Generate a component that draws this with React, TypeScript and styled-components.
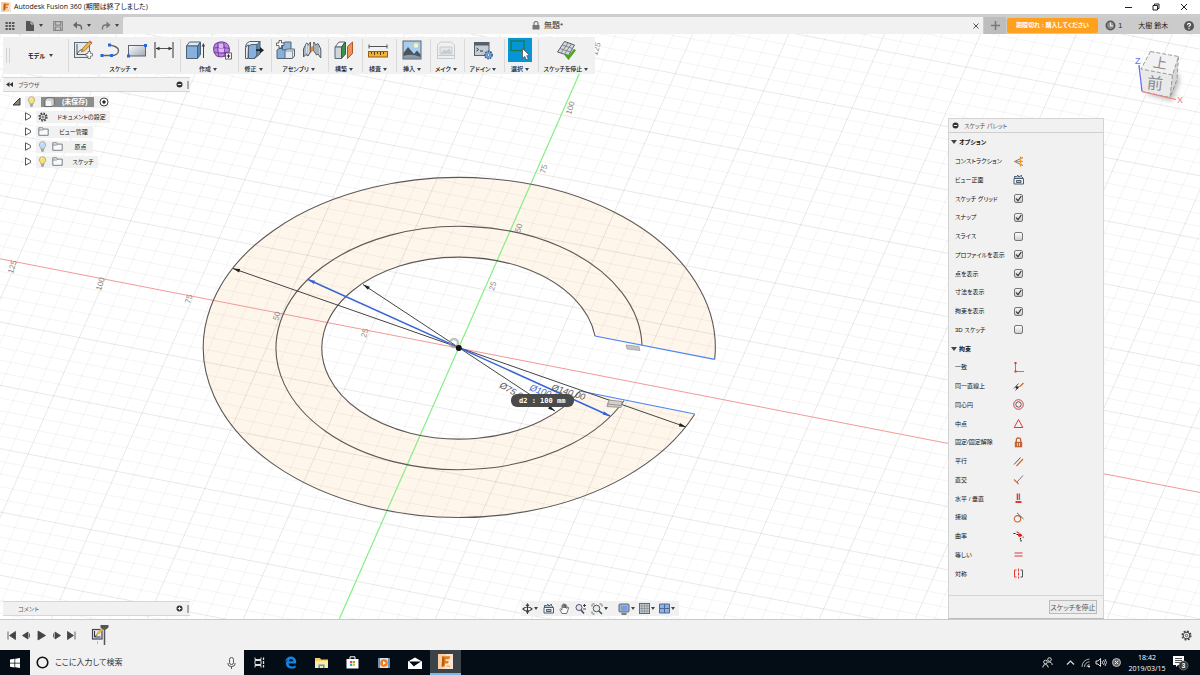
import React from "react";
import styled, { createGlobalStyle, css } from "styled-components";

const GlobalStyle = createGlobalStyle`
  *, *::before, *::after { box-sizing: border-box; }
  body {
    margin: 0;
    background: #fff;
    color: #333;
    font-family: "Liberation Sans", "Noto Sans CJK JP", sans-serif;
    font-size: 7px;
    line-height: 10px;
    font-feature-settings: "palt";
  }
  button, input {
    font: inherit;
    color: inherit;
    font-feature-settings: inherit;
    margin: 0;
    padding: 0;
    border: 0;
    background: none;
  }
  svg { display: block; flex: none; }
  ul { list-style: none; margin: 0; padding: 0; }
`;

/* ---------- page frame ---------- */

const Page = styled.div`
  min-height: 100vh;
  display: flex;
  flex-direction: column;
`;

const TitleBar = styled.header`
  height: 14px;
  display: flex;
  align-items: center;
  padding: 0 11px 0 1px;
  gap: 3px;
  background: #fff;
`;

const WindowTitle = styled.h1`
  margin: 0;
  flex: 1;
  font: 400 7px/12px "Open Sans", "Noto Sans CJK JP", sans-serif;
  font-feature-settings: "palt";
  color: #111;
  white-space: nowrap;
`;

const WindowControls = styled.div`
  display: flex;
  gap: 18px;
`;

const IconButton = styled.button`
  display: flex;
  align-items: center;
  justify-content: center;
  gap: 1px;
`;

const TabBar = styled.nav`
  height: 20px;
  display: flex;
  background: #cbcbcb;
  border-top: 3px solid #cdcdcd;
`;

const QuickAccess = styled.div`
  width: 123px;
  display: flex;
  align-items: center;
  padding-left: 5px;
  gap: 10px;
  ${IconButton} { gap: 4px; }
`;

const DocumentTab = styled.div`
  flex: 1;
  display: flex;
  align-items: center;
  padding-right: 3px;
  background: #f1f1f1;
  border-top-left-radius: 2px;
`;

const DocumentName = styled.span`
  flex: 1;
  display: flex;
  align-items: center;
  justify-content: center;
  gap: 4px;
  font-size: 8px;
`;

const NewTabButton = styled(IconButton)`
  width: 22px;
  margin-left: 1px;
  background: #bdbdbd;
`;

const AccountArea = styled.div`
  width: 194px;
  display: flex;
  align-items: center;
  padding: 0 6px 0 1px;
`;

const PurchaseButton = styled.button`
  width: 91px;
  height: 15px;
  border-radius: 2px;
  background: #ffa01e;
  color: #fff;
  font-size: 6px;
  font-weight: 700;
  line-height: 13px;
  text-align: center;
  white-space: nowrap;
`;

const JobStatus = styled(IconButton)`
  margin-left: 7px;
  gap: 2px;
  font-size: 8px;
`;

const UserButton = styled.button`
  flex: 1;
  padding: 0 4px;
  text-align: center;
  color: #222;
`;

/* ---------- canvas ---------- */

const Workspace = styled.main`
  position: relative;
  flex: 1;
  min-height: 500px;
  display: flex;
  overflow: hidden;
`;

const Drawing = styled.svg`
  position: absolute;
  inset: 0;
  width: 100%;
  height: 100%;
`;

const CubeDrawing = styled.svg`
  position: absolute;
  top: 12px;
  right: 10px;
`;

const LeftColumn = styled.div`
  position: relative;
  flex: 1;
  display: flex;
  flex-direction: column;
  align-items: flex-start;
  padding: 3px 0 3px 3px;
`;

const Toolbar = styled.div`
  height: 37px;
  display: flex;
  align-items: stretch;
  background: #f1f1f1;
  margin-bottom: 3px;
`;

const Grip = styled.span`
  width: 4px;
  height: 15px;
  margin: 11px 0 0 3px;
  border: solid #d2d2d2;
  border-width: 0 1px;
`;

const ModeButton = styled.button`
  width: 57px;
  display: flex;
  align-items: center;
  justify-content: center;
  gap: 4px;
  padding-left: 4px;
  font-size: 6px;
  font-weight: 700;
  color: #111;
`;

const ToolGroup = styled.div<{ $width: number }>`
  width: ${(p) => p.$width}px;
  display: flex;
  flex-direction: column;
  align-items: center;
  padding-top: 3px;
  background: linear-gradient(#dadada, #dadada) left 1px top 2px / 1px 33px no-repeat;
`;

const ToolIcons = styled.div`
  height: 25px;
  display: flex;
  gap: 7px;
  align-items: flex-start;
`;

const ToolButton = styled.button<{ $active?: boolean; $dim?: boolean }>`
  width: 20px;
  height: 20px;
  opacity: ${(p) => (p.$dim ? 0.4 : 1)};
  ${(p) =>
    p.$active &&
    css`
      width: 24px;
      height: 24px;
      margin-top: -2px;
      padding: 2px;
      background: #0696d7;
    `}
`;

const MenuLabel = styled.button`
  display: flex;
  align-items: center;
  gap: 2px;
  font-size: 6px;
  line-height: 9px;
  font-weight: 500;
  color: #111;
  white-space: nowrap;
`;

const Caret = styled.i`
  border: 2px solid transparent;
  border-top: 3px solid #444;
  border-bottom: 0;
`;

/* ---------- browser ---------- */

const StripPanel = styled.section`
  width: 187px;
  height: 15px;
  display: flex;
  align-items: center;
  gap: 5px;
  padding: 0 1px 0 3px;
  background: #f1f1f1;
  border: solid #d6d6d6;
  border-width: 1px 0;
  color: #555;
`;

const StripTitle = styled.h2<{ $inset?: boolean }>`
  margin: 0;
  flex: 1;
  padding-left: ${(p) => (p.$inset ? 12 : 0)}px;
  font-size: 6px;
  font-weight: 400;
`;

const EdgeMark = styled.span`
  width: 2px;
  height: 8px;
  border: solid #aaa;
  border-width: 0 1px;
  margin-left: -1px;
`;

const Tree = styled.ul`
  padding: 2px 0 0 9px;
`;

const TreeRow = styled.li<{ $level: number }>`
  height: 15px;
  display: flex;
  align-items: center;
  gap: 4px;
  padding-left: ${(p) => p.$level * 12}px;
`;

const TreeItem = styled.button<{ $width: number }>`
  width: ${(p) => p.$width}px;
  height: 12px;
  display: flex;
  align-items: center;
  gap: 5px;
  padding-left: 2px;
  background: #f1f1f1;
  font-size: 6px;
  color: #111;
  white-space: nowrap;
`;

const TreeText = styled.span`
  flex: 1;
  text-align: center;
`;

const Selected = styled.span`
  width: 54px;
  height: 10px;
  display: flex;
  align-items: center;
  gap: 7px;
  padding-left: 2px;
  background: #8d8d8d;
  color: #fff;
  font-size: 7px;
  font-weight: 700;
`;

const BottomRow = styled.div`
  align-self: stretch;
  margin-top: auto;
  display: flex;
  justify-content: space-between;
`;

const ViewBar = styled.div`
  width: 158px;
  height: 15px;
  display: flex;
  align-items: center;
  gap: 5px;
  padding: 0 4px 0 1px;
  margin-right: 269px;
  background: #f1f1f1;
`;

const ViewGroup = styled.div`
  display: flex;
  align-items: center;
  gap: 4px;
`;

/* ---------- sketch palette ---------- */

const Palette = styled.aside`
  position: relative;
  width: 156px;
  margin: 84px 96px 0 0;
  display: flex;
  flex-direction: column;
  background: #f1f1f1;
  border: 1px solid #d4d4d4;
  border-bottom-color: #bbb;
`;

const PaletteTitle = styled.h2`
  margin: 0;
  height: 14px;
  display: flex;
  align-items: center;
  gap: 5px;
  padding-left: 3px;
  border-bottom: 1px solid #cfcfcf;
  font-size: 6px;
  font-weight: 400;
  color: #555;
`;

const PaletteRows = styled.div`
  flex: 1;
  display: grid;
  grid-auto-rows: 1fr;
`;

const SectionTitle = styled.button`
  display: flex;
  align-items: center;
  gap: 2px;
  padding-left: 2px;
  font-size: 6px;
  font-weight: 700;
  color: #111;
`;

const SectionArrow = styled(Caret)`
  border-width: 3px;
  border-top-width: 4px;
  border-bottom-width: 0;
`;

const PaletteRow = styled.label`
  display: grid;
  grid-template-columns: 58px 11px;
  align-items: center;
  padding-left: 6px;
  font-size: 6px;
  color: #111;
  white-space: nowrap;
`;

const Check = styled.input`
  appearance: none;
  width: 9px;
  height: 9px;
  justify-self: center;
  border: 1px solid #777;
  border-radius: 2px;
  background: linear-gradient(#fdfdfd, #cfcfcf);
  &:checked {
    background: url("data:image/svg+xml,%3Csvg xmlns='http://www.w3.org/2000/svg' viewBox='0 0 7 7'%3E%3Cpath d='M1 3.5L3 5.7L6.3 1' fill='none' stroke='%23222' stroke-width='1.1'/%3E%3C/svg%3E"),
      linear-gradient(#f4f4f4, #c8c8c8);
  }
`;

const PaletteFooter = styled.div`
  height: 23px;
  margin-top: 12px;
  display: flex;
  align-items: center;
  justify-content: flex-end;
  padding-right: 6px;
  border-top: 1px solid #d4d4d4;
`;

const StopButton = styled.button`
  width: 48px;
  height: 14px;
  border: 1px solid #bbb;
  background: #ececec;
  line-height: 11px;
  color: #555;
  white-space: nowrap;
`;

/* ---------- timeline and taskbar ---------- */

const Timeline = styled.footer`
  height: 31px;
  display: flex;
  align-items: center;
  gap: 4px;
  padding: 0 8px 0 6px;
  background: #f1f1f1;
  border-top: 1px solid #cacaca;
`;

const Spacer = styled.span`
  flex: 1;
`;

const Feature = styled(IconButton)`
  margin-left: 10px;
`;

const Taskbar = styled.div`
  height: 25px;
  display: flex;
  align-items: stretch;
  background: #040c15;
  color: #fff;
`;

const StartButton = styled(IconButton)`
  width: 30px;
`;

const TaskButton = styled(IconButton)<{ $active?: boolean }>`
  width: 31px;
  border-bottom: ${(p) => (p.$active ? "2px solid #76b9ed" : "0")};
  background: ${(p) => (p.$active ? "#3b4248" : "none")};
`;

const SearchBox = styled.label`
  width: 214px;
  display: flex;
  align-items: center;
  gap: 6px;
  padding: 0 8px 0 6px;
  background: #f1f1f1;
  color: #444;
`;

const SearchInput = styled.input`
  flex: 1;
  min-width: 0;
  font-size: 8px;
  outline: 0;
  &::placeholder { color: #333; opacity: 1; }
`;

const Tray = styled.div`
  margin-left: auto;
  display: flex;
  align-items: center;
  gap: 4px;
  padding-right: 11px;
`;

const PeopleButton = styled(IconButton)`
  margin-right: 8px;
`;

const Clock = styled.time`
  width: 42px;
  text-align: center;
  font: 400 7px/11px "Open Sans", sans-serif;
`;

/* ---------- icons ---------- */

type IconProps = { w?: number; h?: number; box?: string; children: React.ReactNode };
const Icon = ({ w = 11, h = w, box, children }: IconProps) => (
  <svg width={w} height={h} viewBox={box ?? `0 0 ${w} ${h}`} fill="none" aria-hidden="true">
    {children}
  </svg>
);

const FusionLogo = ({ size }: { size: number }) => (
  <Icon w={size} box="0 0 16 16">
    <rect width="16" height="16" fill="#fbe3cf" />
    <path d="M0 0h9L5 16H0z" fill="#f8cfa8" />
    <path d="M4.5 2.5h8.5l-1 3H8.3l-.3 2h3.4l-.8 2.6H7.6L7 13.5H4z" fill="#e37d1c" />
    <path d="M4.5 2.5L6.500 4v7.600L4 13.500z" fill="#b75c0c" />
    <path d="M9 13h4" stroke="#f0a050" />
  </Icon>
);

const SketchIcon = (
  <Icon w={20}>
    <rect x="1.5" y="2.5" width="15" height="15" fill="#e4e9ee" stroke="#5f6a74" />
    <path d="M4 4v10.500h11M4 14.500c1-3 3-5 6-5" stroke="#555" />
    <path d="M8.500 12l1-3.500L16 1.500l2.500 2L12 10.500z" fill="#f4b73a" stroke="#80612a" strokeWidth=".7" />
    <path d="M16 1.500l2.500 2 .8-1-2.300-2z" fill="#d65d52" />
    <path d="M15 11.500h2.500v2H19.500V16H17.500v2.500H15V16h-2v-2.500h2z" fill="#fff" stroke="#666" strokeWidth=".8" />
  </Icon>
);

const sketchTools = [
  SketchIcon,
  <Icon w={20}>
    <path d="M2 15.500h9.500M11.500 15.500c4 0 7-2 7-5s-3-4.500-9-5.500" stroke="#666" strokeWidth="1.400" />
    <path d="M.5 14h3v3h-3zM10 14h3v3h-3zM8 3.500h3v3H8z" fill="#2c66d6" />
  </Icon>,
  <Icon w={20}>
    <defs>
      <linearGradient id="rectFill" x1="0" y1="0" x2="1" y2="1">
        <stop stopColor="#fafcff" />
        <stop offset="1" stopColor="#9fa9b5" />
      </linearGradient>
    </defs>
    <rect x="1.500" y="5.500" width="17" height="10.500" fill="url(#rectFill)" stroke="#5b6570" />
    <path d="M17 4h3v3h-3zM0 14.500h3v3H0z" fill="#2c66d6" />
  </Icon>,
  <Icon w={20}>
    <path d="M1 2v16M19 2v16M2 8.500h16" stroke="#555" strokeWidth="1.200" />
    <path d="M1.500 8.500l4-1.800v3.600zM18.500 8.500l-4-1.800v3.600z" fill="#333" />
  </Icon>,
];

const createTools = [
  <Icon w={20}>
    <path d="M1.500 6l3-4h11l-3 4z" fill="#dcebf8" stroke="#52616e" />
    <path d="M1.500 6h11v12.500h-11z" fill="#86b1dd" stroke="#52616e" />
    <path d="M12.500 6l3-4v12.500l-3 4z" fill="#5488bd" stroke="#52616e" />
    <path d="M18.500 18V5" stroke="#444" />
    <path d="M16.500 6.500l2-3.500 1.500 3.500z" fill="#444" />
  </Icon>,
  <Icon w={20}>
    <path d="M3 4Q9 0 15 3.500Q19 8 16.500 14Q11 18.500 4.500 16Q-.5 10 3 4z" fill="#bd86e0" stroke="#6c3d96" />
    <path d="M2 8q8-2 15.500.5M1.500 12q7 2.500 15.500 0M6 2.500Q4.500 9 7 17M11.500 2.500Q14 9 12 17" stroke="#713fa0" strokeWidth=".9" />
    <path d="M7 4h4v4H7zM7 9h5v3H7z" fill="#dcb8f2" />
    <rect x="13.500" y="13" width="6" height="6" fill="#fff" stroke="#444" strokeWidth=".8" />
    <path d="M16.500 14.300v3.600M14.700 16h3.600" stroke="#222" />
  </Icon>,
];

const modifyTools = [
  <Icon w={20}>
    <path d="M1.500 7q0-4 4-5.500h10.500L13 5.500z" fill="#e8f0f8" stroke="#52616e" />
    <path d="M1.500 18.500V8q1-3 3-3l-.5 13.500z" fill="#e5ebf0" stroke="#52616e" />
    <path d="M4.500 18.500V7q1-2.500 3.500-2.500h5v11l-2.500 3z" fill="#86b1dd" stroke="#52616e" />
    <path d="M13 4.500l3-3V14l-5.500 4.500L13 15z" fill="#5e90c2" stroke="#52616e" />
    <path d="M12 9.300h4V7l4 3.200-4 3.200v-2.400h-4z" fill="#222" />
  </Icon>,
];

const assembleTools = [
  <Icon w={20}>
    <path d="M2 18.500V10l2-1.500h7V18.500z" fill="#86b1dd" stroke="#566470" />
    <path d="M7.500 10V4L9.500 2h6.500v7.500z" fill="#8db5de" stroke="#566470" />
    <path d="M10 18.500V11l2-2h7.500v7l-2 2.500z" fill="#e6eaef" stroke="#566470" />
    <path d="M10 11h7.500v7.500M17.500 11l2-2" stroke="#8a95a0" />
    <path d="M4 .5h2.500V3H9v2.500H6.500V8H4V5.500H1.500V3H4z" fill="#fff" stroke="#444" strokeWidth=".8" />
  </Icon>,
  <Icon w={20}>
    <path d="M1.500 17V9L4.500 3l2 1.500L8.500 2v10l-2.500 4-2-1.500z" fill="#a9b4bf" stroke="#4d5a66" />
    <path d="M4.500 13V4M6.300 6v8" stroke="#dfe5ea" />
    <path d="M8.800 7.500q1.500-3 3 0v2.500l-3 3z" fill="#ee8b36" />
    <path d="M18.800 18V9L16 3.500l-2 1.500L11.800 2v9l2.700 4 1.500-1z" fill="#ccd5dd" stroke="#4d5a66" />
    <path d="M14 5v9M16 5v9" stroke="#6e7c88" strokeWidth=".8" />
  </Icon>,
];

const constructTools = [
  <Icon w={20}>
    <path d="M1 7l4-5h6L7.500 7z" fill="#f4f7f9" stroke="#5b6670" />
    <path d="M1 7h6.500v11.500H1z" fill="#cfd7dd" stroke="#5b6670" />
    <path d="M7.500 7L11.500 2v12l-4 4.500z" fill="#3c9448" stroke="#2d6636" />
    <path d="M13.500 6.500L18.500 2v11.500l-5 5z" fill="#ef9358" stroke="#a85a2a" />
  </Icon>,
];

const inspectTools = [
  <Icon w={20}>
    <path d="M1 6.500h18M1 4.500v4M19 4.500v4" stroke="#555" />
    <rect x=".5" y="11.500" width="19" height="5.500" fill="#f2b233" stroke="#8a651c" />
    <path d="M3.500 12v2M6.500 12v3M9.500 12v2M12.500 12v3M15.500 12v2" stroke="#5a3f08" />
  </Icon>,
];

const insertTools = [
  <Icon w={20}>
    <rect x="1" y="1" width="18" height="18" fill="#a9cdec" stroke="#5b6670" />
    <circle cx="14" cy="5.500" r="2.300" fill="#fff2b8" />
    <path d="M1.500 13L6 7l6 7 3-3.500 3.500 4v4h-17z" fill="#4b545e" />
    <path d="M1.500 16q8-3 17 1v1.500h-17z" fill="#8d98a4" />
  </Icon>,
];

const makeTools = [
  <Icon w={20}>
    <path d="M1.500 5l3-3h11l3 3v13.500h-17z" fill="#eceff1" stroke="#8a9299" />
    <path d="M4 7h12v7H4z" fill="#d5dade" stroke="#8a9299" />
    <path d="M5.500 13l3-3 2 1.500 2.500-2.500 2 4zM1.500 15.500h17" fill="#8495a4" stroke="#8a9299" />
  </Icon>,
];

const addinTools = [
  <Icon w={20}>
    <rect x="1.500" y="2.500" width="14.500" height="13" fill="#c5ccd5" stroke="#56606c" />
    <path d="M1.500 2.500h14.500v3H1.500z" fill="#56606c" />
    <path d="M3.500 8l2 1.500-2 1.500M7 11h3" stroke="#333" />
    <circle cx="15.500" cy="15" r="3.600" fill="#85abd8" stroke="#345f93" strokeWidth="1.600" strokeDasharray="1.700 .9" />
    <circle cx="15.500" cy="15" r="1.300" fill="#fff" stroke="#345f93" strokeWidth=".7" />
  </Icon>,
];

const selectTools = [
  <Icon w={20}>
    <rect x="1" y="1" width="13" height="9.500" stroke="#177c49" strokeWidth="1.300" />
    <path d="M12.500 8.500v10l2.300-2 1.600 3.200 1.900-.9-1.600-3.100h2.900z" fill="#fff" stroke="#555" strokeWidth=".8" />
  </Icon>,
];

const stopTools = [
  <Icon w={20}>
    <path d="M1.500 12L8.500 1.500l10 3.500-6 10.500z" fill="#d5d9de" stroke="#566069" />
    <path d="M4 8.500l10.500 3.500M6.300 5l10.200 3.500M5 13l7-10M8.700 14l6.600-10" stroke="#7b858e" />
    <path d="M9.500 14.500l3 3.500L19 9.500" stroke="#4aa51f" strokeWidth="2.600" />
  </Icon>,
];

const Bulb = ({ color }: { color: string }) => (
  <Icon w={9} h={11}>
    <path d="M4.500.7a3.200 3.200 0 0 0-1.700 5.900V8h3.400V6.600A3.200 3.200 0 0 0 4.500.7z" fill={color} stroke="#8c8c70" strokeWidth=".6" />
    <path d="M3 9h3M3.500 10.200h2" stroke="#666" strokeWidth=".8" />
    <path d="M3.300 3q.2-1 1.200-1.200" stroke="#fff" strokeWidth=".7" />
  </Icon>
);

const Folder = () => (
  <Icon w={11} h={9}>
    <path d="M.8 8.300V.8h3.800l1 1.300h4.600v6.200z" fill="#fafafa" stroke="#6a7480" strokeWidth=".9" />
    <path d="M.8 3h4l1-1" stroke="#6a7480" strokeWidth=".8" />
  </Icon>
);

const Gear = ({ size = 10 }: { size?: number }) => (
  <Icon w={size} box="0 0 12 12">
    <circle cx="6" cy="6" r="4.700" stroke="#444" strokeWidth="1.700" strokeDasharray="2 1.690" />
    <circle cx="6" cy="6" r="3.500" stroke="#444" strokeWidth="1.100" />
    <circle cx="6" cy="6" r="1.300" stroke="#444" strokeWidth=".9" />
  </Icon>
);

const Expander = () => (
  <Icon w={8} h={9}>
    <path d="M1.500.8v7.400l5-2.700V3.500z" stroke="#555" fill="#fff" />
  </Icon>
);

const Dot = ({ plus }: { plus?: boolean }) => (
  <Icon w={7}>
    <circle cx="3.500" cy="3.500" r="3" fill="#333" />
    <path d={plus ? "M1.800 3.500h3.400M3.500 1.800v3.400" : "M1.800 3.500h3.400"} stroke="#fff" strokeWidth=".9" />
  </Icon>
);

/* ---------- toolbar data ---------- */

type Group = { label: string; width: number; tools: React.ReactNode[]; active?: boolean; dim?: boolean };

const groups: Group[] = [
  { label: "スケッチ", width: 112, tools: sketchTools },
  { label: "作成", width: 58, tools: createTools },
  { label: "修正", width: 33, tools: modifyTools },
  { label: "アセンブリ", width: 57, tools: assembleTools },
  { label: "構築", width: 34, tools: constructTools },
  { label: "検査", width: 34, tools: inspectTools },
  { label: "挿入", width: 34, tools: insertTools },
  { label: "メイク", width: 34, tools: makeTools, dim: true },
  { label: "アドイン", width: 40, tools: addinTools },
  { label: "選択", width: 34, tools: selectTools, active: true },
  { label: "スケッチを停止", width: 58, tools: stopTools },
];

/* ---------- palette data ---------- */

const ConstructionIcon = (
  <Icon>
    <path d="M10 1.500L1.500 5.500 10 9.500" stroke="#777" />
    <path d="M7.500 .5v10" stroke="#ef9428" strokeWidth="1.300" strokeDasharray="3 .5" />
    <path d="M2.500 5.500H10" stroke="#ef9428" strokeWidth="1.300" />
  </Icon>
);
const LookAtIcon = (
  <Icon>
    <path d="M1 4.500h9.500V10H1z" stroke="#4c5e70" fill="#eef2f5" />
    <path d="M3.500 6.500h4.500v2H3.500zM1.500 4V2.500h2L5 1v1.500h2L8.500 1v1.500L10 4" stroke="#4c5e70" fill="#b6c5d2" />
  </Icon>
);

const toggles: [string, boolean][] = [
  ["スケッチ グリッド", true],
  ["スナップ", true],
  ["スライス", false],
  ["プロファイルを表示", true],
  ["点を表示", true],
  ["寸法を表示", true],
  ["拘束を表示", true],
  ["3D スケッチ", false],
];

const constraints: [string, React.ReactNode][] = [
  ["一致", <><path d="M2.500 1v8M3 9.500h8" stroke="#888" /><path d="M1.500 0h2v2h-2zM1.500 8.500h2v2h-2z" fill="#e2322d" /></>],
  ["同一直線上", <><path d="M1 7.500L5.500 2.500M2.500 9.500l4-4.500" stroke="#555" /><circle cx="4" cy="6.500" r="1.300" fill="#222" /><path d="M7 5.500L10.500 2" stroke="#d9652f" strokeWidth="1.200" /></>],
  ["同心円", <><circle cx="5.500" cy="5.500" r="4.800" stroke="#e0383a" /><circle cx="5.500" cy="5.500" r="2.700" stroke="#556" /></>],
  ["中点", <path d="M5.500 1.500L9.800 9.500H1.200z" stroke="#e0383a" />],
  ["固定/固定解除", <><path d="M3.300 5V3a2.200 2.200 0 0 1 4.400 0v2" stroke="#c56336" strokeWidth="1.300" /><path d="M1.800 4.800h7.400v5.500H1.800z" fill="#c56336" /><path d="M4.500 6v3M6.500 6v3" stroke="#fff" strokeWidth=".7" /></>],
  ["平行", <><path d="M1 8.500L7.500 1.500" stroke="#555" /><path d="M3.500 10L10 3" stroke="#d9652f" strokeWidth="1.200" /></>],
  ["直交", <><path d="M4 8L10 1.500" stroke="#777" /><path d="M1 5.500l4.500 4.500" stroke="#d9652f" strokeWidth="1.200" /></>],
  ["水平 / 垂直", <><path d="M4.500.5v6.500" stroke="#e0383a" strokeWidth="1.600" /><path d="M6.500.5v6.500" stroke="#777" strokeWidth="1.200" /><path d="M2.500 9h6" stroke="#e0383a" strokeWidth="2" /></>],
  ["接線", <><circle cx="4.500" cy="6.800" r="3.200" stroke="#c56336" strokeWidth="1.100" /><path d="M4 .8L10.500 7" stroke="#666" /></>],
  ["曲率", <><path d="M.5 2.500h2M3.500 3.500h2M7.500 7v1.500M8 9v1.500" stroke="#222" strokeWidth="1.200" /><path d="M3.500 .8q4.500 2 7 6" stroke="#e0383a" strokeWidth="1.200" strokeDasharray="3 1" /><circle cx="6.800" cy="4.300" r="1.700" fill="#e51818" /></>],
  ["等しい", <path d="M1.500 4h8M1.500 7h8" stroke="#e0383a" strokeWidth="1.100" />],
  ["対称", <><path d="M3.500 2H1.500v7h2" stroke="#e0383a" /><path d="M7.500 2h2v7h-2" stroke="#555" /><path d="M5.500.5v10" stroke="#e0383a" strokeDasharray="3 1" /></>],
];

/* ---------- sketch drawing ---------- */

const origin = { x: 458.6, y: 348 };
const stepX = { x: 17.68, y: 3.44 };
const stepY = { x: 5.13, y: -11.66 };

function gridPath(major: boolean) {
  const parts: string[] = [];
  const line = (a: typeof stepX, b: typeof stepX, i: number) => {
    const cx = origin.x + a.x * i;
    const cy = origin.y + a.y * i;
    parts.push(`M${cx - b.x * 90} ${cy - b.y * 90}L${cx + b.x * 90} ${cy + b.y * 90}`);
  };
  for (let i = -60; i <= 60; i++) {
    if (i === 0 || (i % 5 === 0) !== major) continue;
    line(stepX, stepY, i);
    line(stepY, stepX, i);
  }
  return parts.join("");
}

const ticks: [number, number, string][] = [
  [13, 274, "125"], [101, 291, "100"], [190, 304, "75"], [278, 321, "50"], [366, 338, "25"],
  [494, 291, "25"], [520, 233, "50"], [545, 174, "75"], [571, 115, "100"], [597, 56, "125"],
];

const Arrow = ({ x, y, angle, color = "#222" }: { x: number; y: number; angle: number; color?: string }) => (
  <path d="M0 0L-7 -1.800V1.800z" fill={color} transform={`translate(${x} ${y}) rotate(${angle})`} />
);

const SketchDrawing = () => (
  <Drawing viewBox="0 34 1200 585" preserveAspectRatio="xMidYMid slice" fill="none">
    <path
      d="M595 336L714.700 359.300A256 170 0 1 0 694.700 414.300L580 391A137.200 91 0 1 1 595 336z"
      fill="#fef5eb"
    />
    <path d={gridPath(false)} stroke="#000" strokeOpacity=".045" />
    <path d={gridPath(true)} stroke="#000" strokeOpacity=".09" />
    <path d="M0 258.800L1200 492.500" stroke="#f29a98" />
    <path d="M588 54L338 622" stroke="#86ee86" strokeWidth="1.200" />
    <g stroke="#5c5856" strokeWidth="1.100">
      <path d="M714.700 359.300A256 170 0 1 0 694.700 414.300" />
      <path d="M642 345.500A183 121.700 0 1 0 624 400.700" />
      <path d="M595 336A137.200 91 0 1 0 580 391" />
    </g>
    <path d="M595 336L714.700 359.300M580 391L694.700 414" stroke="#4b84f5" strokeWidth="1.200" />
    <path d="M233 268.500L686 427M363 284.500L555 411" stroke="#444" />
    <path d="M308 279.500L610 416" stroke="#3764d6" strokeWidth="1.500" />
    <Arrow x={233} y={268.5} angle={199} />
    <Arrow x={686} y={427} angle={19} />
    <Arrow x={363} y={284.5} angle={213} />
    <Arrow x={555} y={411} angle={33} />
    <Arrow x={308} y={279.5} angle={204} color="#3764d6" />
    <Arrow x={610} y={416} angle={24} color="#3764d6" />
    <circle cx="454" cy="343" r="4" stroke="#999" strokeWidth="2.500" strokeOpacity=".6" />
    <circle cx="458.800" cy="348" r="3" fill="#111" />
    <path d="M626 345l13 1.500 1 4-13-1.500z" fill="#c4c4c4" stroke="#999" strokeWidth=".7" />
    <path d="M609 400l13 1.500-1 6-14-1zM607 404l14 1.500" fill="#d4d0cb" stroke="#8a8782" strokeWidth=".8" />
    <g fontFamily="Liberation Sans Narrow, Liberation Sans, sans-serif" fontSize="8" fill="#888">
      {ticks.map(([x, y, text]) => (
        <text key={`${x}-${y}`} transform={`translate(${x} ${y}) rotate(-74)`}>{text}</text>
      ))}
    </g>
    <g fontFamily="Liberation Sans, sans-serif" fontStyle="italic" fontSize="9">
      <text transform="translate(499 387) rotate(30)" fill="#555">Ø75.00</text>
      <text transform="translate(529 390) rotate(20)" fill="#3764d6">Ø100.00</text>
      <text transform="translate(551 390) rotate(17)" fill="#555">Ø140.00</text>
    </g>
    <rect x="511" y="394" width="63" height="13" rx="6" fill="#4a4a4a" />
    <text x="519" y="403" fontFamily="DejaVu Sans Mono, monospace" fontWeight="700" fontSize="7" fill="#fff">d2 : 100 mm</text>
  </Drawing>
);

const ViewCube = () => (
  <CubeDrawing width="60" height="64" viewBox="1130 46 60 64" fill="none">
    <defs>
      <filter id="cubeShadow" x="-50%" y="-50%" width="200%" height="200%">
        <feGaussianBlur stdDeviation="2.500" />
      </filter>
    </defs>
    <path d="M1146 94l26 7 7-18v-10z" fill="#777" opacity=".5" filter="url(#cubeShadow)" />
    <path d="M1150.500 51.500l28 5-6 18.500-31.500-6z" fill="#f2f2f2" />
    <path d="M1141 69l31.500 6-2.500 22.500-28-6z" fill="#e9e9ea" />
    <path d="M1178.500 56.500l-1.500 23-7 18 2.500-22.500z" fill="#d6d6d8" />
    <path d="M1150.500 51.500l28 5-6 18.500-31.500-6zM1178.500 56.500l-1.500 23-7 18M1172.500 75l-2.500 22.500-28-6" stroke="#9a9a9a" strokeDasharray="4 2" />
    <path d="M1142 91.500L1139 65" stroke="#6c6cf0" strokeWidth="1.300" />
    <path d="M1142 91.500l34 8" stroke="#f08080" strokeWidth="1.200" />
    <g fontFamily="Noto Sans CJK JP, sans-serif" fill="#888b92">
      <text x="1153" y="68" fontSize="14" transform="rotate(10 1160 63)">上</text>
      <text x="1147" y="89" fontSize="16" transform="rotate(6 1154 83)">前</text>
    </g>
    <g fontFamily="Liberation Sans, sans-serif" fontSize="9">
      <text x="1135" y="64" fill="#6c6cf0">Z</text>
      <text x="1177" y="103" fill="#f08080">X</text>
    </g>
  </CubeDrawing>
);

/* ---------- sections ---------- */

const Header = () => (
  <>
    <TitleBar>
      <FusionLogo size={10} />
      <WindowTitle>Autodesk Fusion 360 (期間は終了しました)</WindowTitle>
      <WindowControls>
        <IconButton aria-label="最小化"><Icon w={10}><path d="M2 5.500h7" stroke="#222" /></Icon></IconButton>
        <IconButton aria-label="元に戻す"><Icon w={10}><path d="M2 3.500h4.500v4.500H2zM3.500 3.500V2H8v4.500H6.500" stroke="#222" /></Icon></IconButton>
        <IconButton aria-label="閉じる"><Icon w={10}><path d="M2 2l6 6M8 2L2 8" stroke="#222" /></Icon></IconButton>
      </WindowControls>
    </TitleBar>
    <TabBar>
      <QuickAccess>
        <IconButton aria-label="データ パネル">
          <Icon w={10}><path d="M.5 2h10M.5 5h10M.5 8h10" stroke="#555" strokeWidth="2" strokeDasharray="2.300 1" /></Icon>
        </IconButton>
        <IconButton aria-label="ファイル">
          <Icon w={10}><path d="M1 0h5l3 3v7H1z" fill="#555" /><path d="M6 0v3h3" stroke="#cbcbcb" /></Icon>
          <Caret />
        </IconButton>
        <IconButton aria-label="保存">
          <Icon w={10}><path d="M.7.700h8.600v8.600H.7zM2.500.7v3.500h5V.700M2.500 9V6h5v3" stroke="#888" strokeWidth="1.200" /></Icon>
        </IconButton>
        <IconButton aria-label="元に戻す操作">
          <Icon w={10}><path d="M3 4h2.500Q9 4 8.500 8.500" stroke="#666" strokeWidth="1.500" /><path d="M0 4l4-3.500v7z" fill="#666" /></Icon>
          <Caret />
        </IconButton>
        <IconButton aria-label="やり直し">
          <Icon w={10}><path d="M7 4H4.500Q1 4 1.500 8.500" stroke="#777" strokeWidth="1.500" /><path d="M9.500 4l-4-3.500v7z" fill="#777" /></Icon>
          <Caret />
        </IconButton>
      </QuickAccess>
      <DocumentTab>
        <DocumentName>
          <Icon w={8} h={9}><path d="M2 4V2.500a2 2 0 0 1 4 0V4" stroke="#777" strokeWidth="1.200" /><path d="M.500 4h7v4.500h-7z" fill="#777" /></Icon>
          無題*
        </DocumentName>
        <IconButton aria-label="タブを閉じる"><Icon w={8}><path d="M1.500 1.500l5 5M6.500 1.500l-5 5" stroke="#555" /></Icon></IconButton>
      </DocumentTab>
      <NewTabButton aria-label="新しいタブ"><Icon w={9}><path d="M4.500 0v9M0 4.500h9" stroke="#777" strokeWidth="1.500" /></Icon></NewTabButton>
      <AccountArea>
        <PurchaseButton>期限切れ : 購入してください</PurchaseButton>
        <JobStatus>
          <Icon><circle cx="5.500" cy="5.500" r="4.200" fill="#888" stroke="#555" strokeWidth="1.500" /><path d="M5.500 2.500v3.300h2.500" stroke="#eee" strokeWidth="1.200" /></Icon>
          1
        </JobStatus>
        <UserButton>大樹 鈴木</UserButton>
        <IconButton aria-label="ヘルプ">
          <Icon w={10}><circle cx="5" cy="5" r="5" fill="#555" /><path d="M3.500 4q0-1.600 1.500-1.600T6.500 3.800Q6.500 4.800 5 5.300v1M5 7v1.200" stroke="#fff" strokeWidth="1.100" /></Icon>
        </IconButton>
      </AccountArea>
    </TabBar>
  </>
);

const Browser = () => (
  <>
    <StripPanel>
      <Icon w={7}><path d="M3.500 1v5L0 3.500zM7 1v5L3.500 3.500z" fill="#333" /></Icon>
      <StripTitle>ブラウザ</StripTitle>
      <Dot />
      <EdgeMark />
    </StripPanel>
    <Tree>
      <TreeRow $level={0}>
        <Icon w={9}><path d="M8 1v7H1z" fill="#888" stroke="#333" /></Icon>
        <TreeItem $width={84}>
          <Bulb color="#fbe36a" />
          <Selected>
            <Icon w={12} h={10}><path d="M2 3l2-2h7v6.500L9 9.500H2z" fill="#f6f6f6" stroke="#555" strokeWidth=".8" /><path d="M2 3h7v6.500M9 3l2-2" stroke="#999" strokeWidth=".7" /></Icon>
            (未保存)
          </Selected>
          <Icon w={10}><circle cx="5" cy="5" r="4" stroke="#444" fill="#fff" /><circle cx="5" cy="5" r="1.700" fill="#222" /></Icon>
        </TreeItem>
      </TreeRow>
      <TreeRow $level={1}>
        <Expander />
        <TreeItem $width={74}><Gear /><TreeText>ドキュメントの設定</TreeText></TreeItem>
      </TreeRow>
      <TreeRow $level={1}>
        <Expander />
        <TreeItem $width={57}><Folder /><TreeText>ビュー管理</TreeText></TreeItem>
      </TreeRow>
      <TreeRow $level={1}>
        <Expander />
        <TreeItem $width={57}><Bulb color="#bfdcfb" /><Folder /><TreeText>原点</TreeText></TreeItem>
      </TreeRow>
      <TreeRow $level={1}>
        <Expander />
        <TreeItem $width={62}><Bulb color="#fbe36a" /><Folder /><TreeText>スケッチ</TreeText></TreeItem>
      </TreeRow>
    </Tree>
  </>
);

const ViewTools = () => (
  <ViewBar>
    <IconButton aria-label="オービット">
      <Icon><ellipse cx="5.500" cy="6" rx="4.500" ry="1.800" stroke="#555" /><path d="M5.500 1v10" stroke="#333" /><path d="M5.500 0l2 3h-4zM5.500 11l2-3h-4zM0 6l2.500-1.800v3.600zM11 6L8.500 4.200v3.600z" fill="#444" /></Icon>
      <Caret />
    </IconButton>
    <IconButton aria-label="ビュー正面">{LookAtIcon}</IconButton>
    <IconButton aria-label="画面移動">
      <Icon><path d="M3 10.500L.8 6.500l.9-.7L3 7V2.300h1V5V1h1.300v4V1.300h1.200V5V2.300h1.200V5.500l1-1.500 1 .6-2 5.900z" fill="#fff" stroke="#555" strokeWidth=".8" /></Icon>
    </IconButton>
    <IconButton aria-label="ズーム">
      <Icon><circle cx="4" cy="4.500" r="3" fill="#dfeaf4" stroke="#556" /><path d="M6 7l3 3.500" stroke="#445" strokeWidth="1.500" /><path d="M8 2.500h3M9.500 1v3M8 6h3" stroke="#333" strokeWidth=".9" /></Icon>
    </IconButton>
    <IconButton aria-label="フィット">
      <Icon w={12}><path d="M1 3.500V1h2.500M1 8.500V11h2.500M8.500 1H11v2.500" stroke="#666" strokeDasharray="2 1" /><circle cx="5.500" cy="5.500" r="3.300" fill="#dfeee8" stroke="#556" /><path d="M8 8l3 3" stroke="#445" strokeWidth="1.500" /></Icon>
      <Caret />
    </IconButton>
    <Spacer />
    <ViewGroup>
      <IconButton aria-label="表示設定">
        <Icon w={12}><rect x="1" y="1" width="10" height="8" rx="1" fill="#a8b2bc" stroke="#5b6670" /><path d="M3 3h6v4.500H3z" fill="#6d9ff0" /><path d="M3.500 11h5" stroke="#555" strokeWidth="1.500" /></Icon>
        <Caret />
      </IconButton>
      <IconButton aria-label="グリッドとスナップ">
        <Icon><rect x=".5" y=".5" width="10" height="10" fill="#c9ced3" stroke="#666" /><path d="M.5 3h10M.5 5.500h10M.5 8h10M3 .5v10M5.500.5v10M8 .5v10" stroke="#808890" strokeWidth=".7" /></Icon>
        <Caret />
      </IconButton>
      <IconButton aria-label="ビューポート">
        <Icon><path d="M.5 1h10v9H.5zM5.500 1v9M.5 5.500h10" fill="#8db2e8" stroke="#4f6a92" /></Icon>
        <Caret />
      </IconButton>
    </ViewGroup>
    <Spacer />
  </ViewBar>
);

const SketchPalette = () => (
  <Palette>
    <PaletteTitle><Dot />スケッチ パレット</PaletteTitle>
    <PaletteRows>
      <SectionTitle><SectionArrow />オプション</SectionTitle>
      <PaletteRow>コンストラクション<IconButton aria-label="コンストラクション">{ConstructionIcon}</IconButton></PaletteRow>
      <PaletteRow>ビュー正面<IconButton aria-label="ビュー正面">{LookAtIcon}</IconButton></PaletteRow>
      {toggles.map(([label, on]) => (
        <PaletteRow key={label}>{label}<Check type="checkbox" defaultChecked={on} /></PaletteRow>
      ))}
      <SectionTitle><SectionArrow />拘束</SectionTitle>
      {constraints.map(([label, drawing]) => (
        <PaletteRow key={label}>{label}<IconButton aria-label={label}><Icon>{drawing}</Icon></IconButton></PaletteRow>
      ))}
    </PaletteRows>
    <PaletteFooter><StopButton>スケッチを停止</StopButton></PaletteFooter>
  </Palette>
);

const playback: [string, string][] = [
  ["最初へ", "M2 1.500V9.500M9.500 1.500v8L3.500 5.500z"],
  ["前へ", "M7 2v7L1.500 5.500zM8.500 3.500v4"],
  ["再生", "M2 1v9L9.500 5.500z"],
  ["次へ", "M4 2v7L9.500 5.500zM2.500 3.500v4"],
  ["最後へ", "M9 1.500V9.500M1.500 1.500v8L7.500 5.500z"],
];

const TimelineBar = () => (
  <Timeline>
    {playback.map(([label, d]) => (
      <IconButton key={label} aria-label={label}><Icon><path d={d} fill="#444" stroke="#444" strokeWidth=".8" /></Icon></IconButton>
    ))}
    <Feature aria-label="スケッチ 1">
      <Icon w={20} h={22}>
        <rect x="1.500" y="5.500" width="9.500" height="9.500" fill="#dce9f5" stroke="#445" strokeWidth="1.200" />
        <path d="M3.500 7v6h6M3.500 13l4-4" stroke="#333" />
        <path d="M5 11l1.500-3L12 3l1.500 1.500L8 10z" fill="#f4b030" />
        <path d="M9.500 1h8v2.500l-2.500 2H12l-2.500-2z" fill="#555" />
        <path d="M13.500 5v16" stroke="#555" strokeWidth="1.500" />
        <path d="M6.500 17v3" stroke="#bbb" />
      </Icon>
    </Feature>
    <Spacer />
    <IconButton aria-label="設定"><Gear size={11} /></IconButton>
  </Timeline>
);

const WindowsTaskbar = () => (
  <Taskbar>
    <StartButton aria-label="スタート">
      <Icon w={10}><path d="M0 1.500l4.500-.7v4H0zM5.200.700L10 0v4.800H5.200zM0 5.500h4.500v4L0 8.800zM5.200 5.500H10V10l-4.800-.7z" fill="#fff" /></Icon>
    </StartButton>
    <SearchBox>
      <Icon w={13}><circle cx="6.500" cy="6.500" r="5.300" stroke="#111" strokeWidth="1.600" /></Icon>
      <SearchInput aria-label="検索" placeholder="ここに入力して検索" />
      <Icon w={9} h={12}><rect x="2.500" y=".5" width="4" height="7" rx="2" stroke="#555" /><path d="M1 6v1q0 2.500 3.500 2.500T8 7V6M4.500 9.500V12" stroke="#555" /></Icon>
    </SearchBox>
    <TaskButton aria-label="タスク ビュー">
      <Icon><path d="M1 .5v2h6v-2M1 10.500v-2h6v2M1 3.500h6v4H1z" stroke="#ddd" /><path d="M9.500.5v2.500M9.500 4v3M9.500 8v2.500" stroke="#ddd" strokeWidth="1.300" /></Icon>
    </TaskButton>
    <TaskButton aria-label="Edge">
      <Icon w={13}><path d="M1 6.300C1.500 2.500 4 .6 6.800.6c3.500 0 5.400 2.400 5.400 5.500v1.400H4.700c.1 2.200 1.800 2.900 3.500 2.900 1.300 0 2.400-.3 3.400-.9v2.300c-1.100.6-2.300.8-3.800.8-3.400 0-5.800-1.800-5.800-5 0-2 1-3.500 2.500-4.300C2.800 3.800 1.800 4.800 1 6.300zm3.800-1h4.400C9.200 4 8.500 3 7.100 3 5.800 3 5 4 4.800 5.300z" fill="#1284e8" /></Icon>
    </TaskButton>
    <TaskButton aria-label="エクスプローラー">
      <Icon w={13} h={12}><path d="M0 1h5l1 1.500h7V11H0z" fill="#f5cf63" /><path d="M0 4h13v7H0z" fill="#fce9a5" /><path d="M3.500 11V7.500h6V11H8V9H5v2z" fill="#3f9ae0" /></Icon>
    </TaskButton>
    <TaskButton aria-label="ストア">
      <Icon w={13}><path d="M.5 3h12v9.500H.500z" fill="#fff" /><path d="M4 3V.800h5V3" stroke="#fff" /><path d="M4 5h2.200v2.200H4z" fill="#e6522c" /><path d="M6.800 5H9v2.200H6.800z" fill="#7cb82f" /><path d="M4 7.800h2.200V10H4z" fill="#28a4e8" /><path d="M6.800 7.800H9V10H6.800z" fill="#f5b51e" /></Icon>
    </TaskButton>
    <TaskButton aria-label="メディア">
      <Icon w={12}><path d="M0 1h12v10H0z" fill="#d9e3ec" /><path d="M0 1h2v10H0zM10 1h2v10h-2z" fill="#6b8fb5" /><circle cx="6" cy="6" r="3.800" fill="#ef7d1a" /><path d="M5 4v4l3-2z" fill="#fff" /></Icon>
    </TaskButton>
    <TaskButton aria-label="メール">
      <Icon w={14} h={12}><path d="M0 4.500L7 .5l7 4V12H0z" fill="#fff" /><path d="M1 4.500h12L7 8.500l-1 1z" fill="#040c15" /></Icon>
    </TaskButton>
    <TaskButton $active aria-label="Fusion 360"><FusionLogo size={15} /></TaskButton>
    <Tray>
      <PeopleButton aria-label="People"><Icon><circle cx="3.500" cy="5" r="1.800" stroke="#ddd" /><path d="M.8 10.500q0-3 2.700-3t2.700 3" stroke="#ddd" /><circle cx="7.500" cy="2.500" r="1.800" stroke="#ddd" /><path d="M6 5.200q4-.8 4.200 2.800" stroke="#ddd" /></Icon></PeopleButton>
      <IconButton aria-label="隠れているインジケーター"><Icon><path d="M2 7.500L5.500 4 9 7.500" stroke="#ddd" strokeWidth="1.200" /></Icon></IconButton>
      <IconButton aria-label="ネットワーク"><Icon><path d="M2 10Q2 3 9.500 2M4.500 10q0-4.500 5-5.300M7 10q0-2.200 2.500-2.700" stroke="#aaa" /><circle cx="9" cy="9.500" r="1" fill="#fff" /></Icon></IconButton>
      <IconButton aria-label="音量"><Icon w={12} h={11}><path d="M1 4h2l2.500-2.500v8L3 7H1z" stroke="#ddd" /><path d="M7 4q1 1.500 0 3M8.500 3q2 2.500 0 5M10 2q3 3.500 0 7" stroke="#ddd" strokeWidth=".9" /></Icon></IconButton>
      <IconButton aria-label="通知オフ"><Icon><circle cx="5.500" cy="5.500" r="4" fill="#666" stroke="#bbb" /><path d="M3.800 3.800l3.400 3.400M7.200 3.800L3.800 7.200" stroke="#eee" /></Icon></IconButton>
      <Clock>18:42<br />2019/03/15</Clock>
      <IconButton aria-label="アクション センター">
        <Icon w={17} h={16}><path d="M1 1h11v9H6L4 12v-2H1z" fill="#fff" /><path d="M3 3.500h7M3 5.500h7M3 7.500h5" stroke="#222" strokeWidth=".8" /><circle cx="11.500" cy="10.500" r="4.500" fill="#30363c" stroke="#888" strokeWidth=".7" /><text x="9.600" y="13.300" fontSize="7" fontWeight="700" fill="#fff">3</text></Icon>
      </IconButton>
    </Tray>
  </Taskbar>
);

export default function App() {
  return (
    <Page>
      <GlobalStyle />
      <Header />
      <Workspace>
        <SketchDrawing />
        <LeftColumn>
          <Toolbar>
            <Grip />
            <ModeButton>モデル<Caret /></ModeButton>
            {groups.map((g) => (
              <ToolGroup key={g.label} $width={g.width}>
                <ToolIcons>
                  {g.tools.map((tool, i) => (
                    <ToolButton key={i} $active={g.active} $dim={g.dim} aria-label={`${g.label} ${i + 1}`}>{tool}</ToolButton>
                  ))}
                </ToolIcons>
                <MenuLabel>{g.label}<Caret /></MenuLabel>
              </ToolGroup>
            ))}
          </Toolbar>
          <Browser />
          <BottomRow>
            <StripPanel><StripTitle $inset>コメント</StripTitle><Dot plus /><EdgeMark /></StripPanel>
            <ViewTools />
          </BottomRow>
        </LeftColumn>
        <SketchPalette />
        <ViewCube />
      </Workspace>
      <TimelineBar />
      <WindowsTaskbar />
    </Page>
  );
}
